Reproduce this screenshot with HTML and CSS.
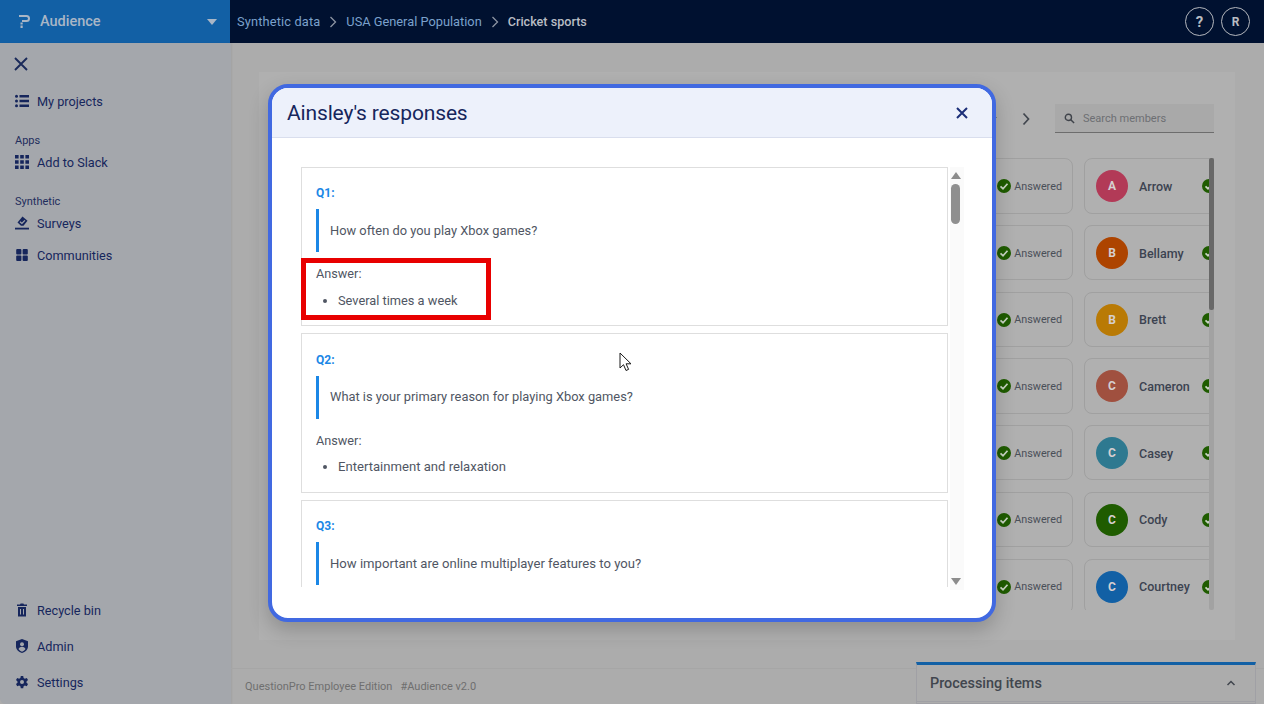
FILE: index.html
```html
<!DOCTYPE html>
<html lang="en">
<head>
<meta charset="utf-8">
<title>Ainsley's responses</title>
<link rel="stylesheet" href="styles.css">
</head>
<body>
<div class="app">
  <header class="topbar">
    <div class="brand">
      <svg class="brand-logo" viewBox="0 0 11 13"><path d="M0 1h7.500a2.500 2.500 0 0 1 0 5H3" fill="none" stroke="#a9b6c6" stroke-width="2"/><path d="M1.500 7.500h2.200v2H1.500zM1.500 10.600h2.200V13H1.500z" fill="#a9b6c6"/></svg>
      <span class="brand-name">Audience</span>
      <span class="brand-caret"></span>
    </div>
    <nav class="crumbs">
      <span class="crumb crumb-first">Synthetic data</span>
      <svg class="crumb-sep" viewBox="0 0 8 12"><path d="M1.500 1l5 5-5 5" fill="none" stroke="#8c95a3" stroke-width="1.300"/></svg>
      <span class="crumb">USA General Population</span>
      <svg class="crumb-sep" viewBox="0 0 8 12"><path d="M1.500 1l5 5-5 5" fill="none" stroke="#8c95a3" stroke-width="1.300"/></svg>
      <span class="crumb crumb-current">Cricket sports</span>
    </nav>
    <div class="top-actions">
      <span class="round-btn round-help">?</span>
      <span class="round-btn">R</span>
    </div>
  </header>

  <div class="body">
    <aside class="sidebar">
      <svg class="side-close" viewBox="0 0 14 14"><path d="M1 1l12 12M13 1L1 13" stroke="#1a2a5a" stroke-width="1.900" fill="none"/></svg>
      <div class="side-item side-first">
        <svg class="side-icon" viewBox="0 0 14 14"><circle cx="1.500" cy="2.200" r="1.500" fill="#16265c"/><circle cx="1.500" cy="7" r="1.500" fill="#16265c"/><circle cx="1.500" cy="11.800" r="1.500" fill="#16265c"/><path d="M4.500 1H14v2.500H4.500zM4.500 5.700H14v2.500H4.500zM4.500 10.500H14V13H4.500z" fill="#16265c"/></svg>
        <span>My projects</span>
      </div>
      <div class="side-label side-label-apps">Apps</div>
      <div class="side-item side-tight">
        <svg class="side-icon" viewBox="0 0 14 14"><path d="M0 0h3.600v3.600H0zM5.200 0h3.600v3.600H5.200zM10.400 0H14v3.600h-3.600zM0 5.200h3.600v3.600H0zM5.200 5.200h3.600v3.600H5.200zM10.400 5.200H14v3.600h-3.600zM0 10.400h3.600V14H0zM5.200 10.400h3.600V14H5.200zM10.400 10.400H14V14h-3.600z" fill="#16265c"/></svg>
        <span>Add to Slack</span>
      </div>
      <div class="side-label side-label-syn">Synthetic</div>
      <div class="side-item side-tight">
        <svg class="side-icon" viewBox="0 0 14 14"><path d="M0 11.700h14V13.500H0z" fill="#16265c"/><path d="M7.500.5l5 4.200-4 5H6L2.500 6.500z" fill="#16265c"/><path d="M5 5.800l1.900 1.700 3-3.200" stroke="#a4a7ac" stroke-width="1.200" fill="none"/></svg>
        <span>Surveys</span>
      </div>
      <div class="side-item side-comm">
        <svg class="side-icon" viewBox="0 0 14 14"><rect x="1.200" y="1" width="5.200" height="5.400" rx="1" fill="#16265c"/><rect x="7.600" y="1" width="5.200" height="5.400" rx="1" fill="#16265c"/><rect x="1.200" y="7.600" width="5.200" height="5.400" rx="1" fill="#16265c"/><rect x="7.600" y="7.600" width="5.200" height="5.400" rx="1" fill="#16265c"/></svg>
        <span>Communities</span>
      </div>
      <div class="side-spacer"></div>
      <div class="side-item side-bottom">
        <svg class="side-icon" viewBox="0 0 14 14"><path d="M2 1.500h3l.6-1h2.800l.6 1h3v1.500H2zM3 4h8v9.500H3zM5 6v5.500h1V6zM8 6v5.500h1V6z" fill="#16265c" fill-rule="evenodd"/></svg>
        <span>Recycle bin</span>
      </div>
      <div class="side-item side-bottom">
        <svg class="side-icon" viewBox="0 0 14 14"><path d="M7 0l6 2.200v5C13 10.500 10.500 13 7 14 3.500 13 1 10.500 1 7.200v-5z" fill="#16265c"/><circle cx="7" cy="5.300" r="2" fill="#a4a7ac"/><path d="M3.500 10c.8-1.500 2-2.200 3.500-2.200s2.700.7 3.500 2.200C9.500 11.500 8.300 12.300 7 12.700 5.700 12.300 4.500 11.500 3.500 10z" fill="#a4a7ac"/></svg>
        <span>Admin</span>
      </div>
      <div class="side-item side-bottom">
        <svg class="side-icon" viewBox="0 0 14 14"><path fill-rule="evenodd" d="M5.800 0h2.400l.4 2 1.300.7 1.900-.7 1.200 2.100-1.500 1.300v1.400l1.500 1.300-1.200 2.100-1.900-.7-1.300.7-.4 2H5.800l-.4-2-1.300-.7-1.900.7L1 8.100l1.500-1.300V5.400L1 4.100l1.200-2.100 1.900.7 1.300-.7zM7 4.100a2 2 0 1 0 0 4 2 2 0 0 0 0-4z" fill="#16265c" transform="translate(0 1)"/></svg>
        <span>Settings</span>
      </div>
    </aside>

    <main class="main">
      <section class="panel">
        <div class="panel-tools">
          <span class="pager-caret"></span>
          <svg class="pager-next" viewBox="0 0 8 14"><path d="M1.500 1.500L6.500 7l-5 5.500" fill="none" stroke="#41464e" stroke-width="1.700"/></svg>
          <div class="search">
            <svg class="search-icon" viewBox="0 0 12 12"><circle cx="4.800" cy="4.800" r="3.400" fill="none" stroke="#3f434a" stroke-width="1.500"/><path d="M7.400 7.400L11 11" stroke="#3f434a" stroke-width="1.600"/></svg>
            <span>Search members</span>
          </div>
        </div>
        <div class="members">
          <div class="member-grid">
            <div class="card"><span class="status"><span class="tick"><svg viewBox="0 0 14 14"><path d="M3.500 7.300l2.500 2.400 4.500-5" fill="none" stroke="#c9d4c3" stroke-width="1.700"/></svg></span>Answered</span></div>
            <div class="card"><span class="avatar av-a">A</span><span class="name">Arrow</span><span class="tick tick-clip"><svg viewBox="0 0 14 14"><path d="M3.500 7.300l2.500 2.400 4.500-5" fill="none" stroke="#c9d4c3" stroke-width="1.700"/></svg></span></div>
            <div class="card"><span class="status"><span class="tick"><svg viewBox="0 0 14 14"><path d="M3.500 7.300l2.500 2.400 4.500-5" fill="none" stroke="#c9d4c3" stroke-width="1.700"/></svg></span>Answered</span></div>
            <div class="card"><span class="avatar av-b">B</span><span class="name">Bellamy</span><span class="tick tick-clip"><svg viewBox="0 0 14 14"><path d="M3.500 7.300l2.500 2.400 4.500-5" fill="none" stroke="#c9d4c3" stroke-width="1.700"/></svg></span></div>
            <div class="card"><span class="status"><span class="tick"><svg viewBox="0 0 14 14"><path d="M3.500 7.300l2.500 2.400 4.500-5" fill="none" stroke="#c9d4c3" stroke-width="1.700"/></svg></span>Answered</span></div>
            <div class="card"><span class="avatar av-br">B</span><span class="name">Brett</span><span class="tick tick-clip"><svg viewBox="0 0 14 14"><path d="M3.500 7.300l2.500 2.400 4.500-5" fill="none" stroke="#c9d4c3" stroke-width="1.700"/></svg></span></div>
            <div class="card"><span class="status"><span class="tick"><svg viewBox="0 0 14 14"><path d="M3.500 7.300l2.500 2.400 4.500-5" fill="none" stroke="#c9d4c3" stroke-width="1.700"/></svg></span>Answered</span></div>
            <div class="card"><span class="avatar av-c">C</span><span class="name">Cameron</span><span class="tick tick-clip"><svg viewBox="0 0 14 14"><path d="M3.500 7.300l2.500 2.400 4.500-5" fill="none" stroke="#c9d4c3" stroke-width="1.700"/></svg></span></div>
            <div class="card"><span class="status"><span class="tick"><svg viewBox="0 0 14 14"><path d="M3.500 7.300l2.500 2.400 4.500-5" fill="none" stroke="#c9d4c3" stroke-width="1.700"/></svg></span>Answered</span></div>
            <div class="card"><span class="avatar av-ca">C</span><span class="name">Casey</span><span class="tick tick-clip"><svg viewBox="0 0 14 14"><path d="M3.500 7.300l2.500 2.400 4.500-5" fill="none" stroke="#c9d4c3" stroke-width="1.700"/></svg></span></div>
            <div class="card"><span class="status"><span class="tick"><svg viewBox="0 0 14 14"><path d="M3.500 7.300l2.500 2.400 4.500-5" fill="none" stroke="#c9d4c3" stroke-width="1.700"/></svg></span>Answered</span></div>
            <div class="card"><span class="avatar av-co">C</span><span class="name">Cody</span><span class="tick tick-clip"><svg viewBox="0 0 14 14"><path d="M3.500 7.300l2.500 2.400 4.500-5" fill="none" stroke="#c9d4c3" stroke-width="1.700"/></svg></span></div>
            <div class="card"><span class="status"><span class="tick"><svg viewBox="0 0 14 14"><path d="M3.500 7.300l2.500 2.400 4.500-5" fill="none" stroke="#c9d4c3" stroke-width="1.700"/></svg></span>Answered</span></div>
            <div class="card"><span class="avatar av-cr">C</span><span class="name">Courtney</span><span class="tick tick-clip"><svg viewBox="0 0 14 14"><path d="M3.500 7.300l2.500 2.400 4.500-5" fill="none" stroke="#c9d4c3" stroke-width="1.700"/></svg></span></div>
          </div>
          <div class="member-scroll"><div class="member-thumb"></div></div>
        </div>
      </section>
      <footer class="footer">
        <span>QuestionPro Employee Edition</span>
        <span>#Audience v2.0</span>
      </footer>
    </main>
  </div>

  <aside class="processing">
    <span class="processing-title">Processing items</span>
    <svg class="processing-chev" viewBox="0 0 10 6"><path d="M1.500 5L5 1.500 8.500 5" fill="none" stroke="#41464e" stroke-width="1.500"/></svg>
  </aside>

  <div class="modal">
    <div class="modal-head">
      <h1 class="modal-title">Ainsley's responses</h1>
      <svg class="modal-close" viewBox="0 0 12 12"><path d="M1 1l10 10M11 1L1 11" stroke="#1c2f78" stroke-width="2" fill="none"/></svg>
    </div>
    <div class="modal-body">
      <div class="qlist">
        <article class="qcard">
          <div class="qnum">Q1:</div>
          <blockquote class="qtext">How often do you play Xbox games?</blockquote>
          <div class="answer-label">Answer:</div>
          <ul class="answers"><li>Several times a week</li></ul>
          <div class="highlight"></div>
        </article>
        <article class="qcard qcard-mid">
          <div class="qnum">Q2:</div>
          <blockquote class="qtext">What is your primary reason for playing Xbox games?</blockquote>
          <div class="answer-label">Answer:</div>
          <ul class="answers"><li>Entertainment and relaxation</li></ul>
        </article>
        <article class="qcard">
          <div class="qnum">Q3:</div>
          <blockquote class="qtext qtext-wide">How important are online multiplayer features to you?</blockquote>
        </article>
      </div>
      <div class="vscroll">
        <span class="arrow-up"></span>
        <span class="vthumb"></span>
        <span class="arrow-down"></span>
      </div>
    </div>
  </div>

  <svg class="cursor" viewBox="0 0 13 20"><path d="M1 1v15l3.500-3.300L7 18.500l2.600-1.100-2.500-5.600H12z" fill="#fff" stroke="#1a1a1a" stroke-width="1"/></svg>
</div>
</body>
</html>
```
FILE: styles.css
```css
* { box-sizing: border-box; }
html, body { margin: 0; height: 100%; overflow: hidden; }
body { font-family: "Roboto", "Noto Sans", sans-serif; font-size: 12.700px; color: #16265c; }

.app { position: relative; width: 1264px; height: 704px; display: flex; flex-direction: column; background: #acacac; overflow: hidden; }

.topbar { height: 43px; flex: none; display: flex; align-items: center; background: #001130; }
.brand { width: 230px; height: 100%; display: flex; align-items: center; padding-left: 19px; background: #1260a5; }
.brand-logo { width: 11px; height: 13px; }
.brand-name { margin-left: 10px; font-size: 14.500px; font-weight: 500; color: #a9b6c6; }
.brand-caret { margin-left: auto; margin-right: 13px; width: 0; height: 0; border-left: 5px solid transparent; border-right: 5px solid transparent; border-top: 6px solid #a9b6c6; }
.crumbs { display: flex; align-items: center; padding-left: 7px; font-size: 12.800px; }
.crumb { color: #7ba1cc; }
.crumb-first { letter-spacing: .15px; }
.crumb-current { color: #b9bdc4; font-weight: 500; font-size: 12.600px; }
.crumb-sep { width: 8px; height: 12px; margin: 0 9px; }
.top-actions { margin-left: auto; display: flex; gap: 7px; padding-right: 14px; }
.round-btn { width: 29px; height: 29px; border: 1px solid #b4b7bd; border-radius: 50%; display: flex; align-items: center; justify-content: center; color: #b8bcc2; font-weight: 700; font-size: 12px; }
.round-help { font-size: 15px; }

.body { flex: 1; display: flex; min-height: 0; }
.sidebar { width: 231px; flex: none; display: flex; flex-direction: column; padding: 14px 0 13px 15px; background: #a4a7ac; border-bottom-left-radius: 6px; box-shadow: 1px 0 2px rgba(0,0,0,.06); }
.side-close { width: 14px; height: 14px; margin-left: -1px; }
.side-item { display: flex; align-items: center; gap: 8px; height: 18px; font-size: 12.700px; color: #16265c; }
.side-icon { width: 14px; height: 14px; flex: none; }
.side-first { margin-top: 21px; }
.side-label { font-size: 11px; color: #1f2d5c; height: 14px; line-height: 14px; }
.side-label-apps { margin-top: 24px; }
.side-label-syn { margin-top: 24px; }
.side-tight { margin-top: 5px; }
.side-comm { margin-top: 14px; }
.side-spacer { flex: 1; }
.side-bottom { margin-top: 18px; }

.main { flex: 1; display: flex; flex-direction: column; min-width: 0; }
.panel { margin: 29px 29px 0 28px; height: 568px; flex: none; background: #b0b0b0; padding: 32px 21px 30px 0; display: flex; flex-direction: column; overflow: hidden; }
.panel-tools { height: 29px; flex: none; display: flex; justify-content: flex-end; align-items: center; gap: 25px; }
.pager-caret { width: 0; height: 0; border-left: 3px solid transparent; border-right: 3px solid transparent; border-top: 3px solid #44505f; }
.pager-next { width: 8px; height: 14px; }
.search { width: 159px; height: 29px; display: flex; align-items: center; gap: 8px; padding-left: 9px; background: #a9a9a9; border-bottom: 1px solid #6d6d6d; font-size: 11px; color: #6d6f73; }
.search-icon { width: 11px; height: 11px; }
.members { position: relative; margin-top: 25px; padding-top: .4px; flex: 1; min-height: 0; overflow: hidden; margin-left: 620px; }
.member-grid { display: grid; grid-template-columns: repeat(2, 194px); column-gap: 11px; row-gap: 11.500px; }
.card { position: relative; height: 55.200px; display: flex; align-items: center; padding: .8px 0 0 11px; border: 1px solid #a0a0a0; border-radius: 8px; }
.avatar { width: 32px; height: 32px; flex: none; border-radius: 50%; display: flex; align-items: center; justify-content: center; font-size: 12px; font-weight: 700; color: #d5cfd0; }
.av-a { background: #b23a57; }
.av-b { background: #ad4400; }
.av-br { background: #b97a05; }
.av-c { background: #a0503f; }
.av-ca { background: #2e7990; }
.av-co { background: #1f5c00; }
.av-cr { background: #1260a5; }
.name { margin-left: 11px; font-size: 12.500px; font-weight: 500; color: #3c4350; }
.status { margin-left: auto; margin-right: 10px; display: flex; align-items: center; gap: 3px; font-size: 10.800px; color: #4a4f58; }
.tick { width: 14px; height: 14px; border-radius: 50%; background: #1f5c00; display: block; flex: none; }
.tick svg { display: block; width: 14px; height: 14px; }
.card .tick-clip { position: absolute; left: 117px; }
.member-scroll { position: absolute; top: 0; right: 0; bottom: 0; width: 5px; background: #a2a2a2; border-radius: 2px; }
.member-thumb { height: 152px; background: #686868; border-radius: 2px; }

.footer { margin-top: 28px; flex: 1; display: flex; align-items: center; gap: 8px; padding: 0 0 0 14px; border-top: 1px solid #a6a6a6; font-size: 11px; color: #6f6f6f; }

.processing { position: absolute; left: 916px; top: 662px; width: 340px; height: 42px; display: flex; align-items: center; justify-content: space-between; padding: 0 19px 2px 13px; background: #acacac; border: 1px solid #a0a0a5; border-top: 3px solid #1260a5; font-size: 14.400px; font-weight: 500; color: #41464e; }
.processing::after { content: ""; position: absolute; left: 0; right: 0; bottom: 1px; border-bottom: 1px solid #a0a0a5; }
.processing-chev { width: 10px; height: 6px; }

.modal { position: absolute; left: 268px; top: 84px; width: 728px; height: 538px; display: flex; flex-direction: column; background: #fff; border: 4px solid #4169e1; border-radius: 20px; box-shadow: 0 8px 20px rgba(0,0,0,.2); overflow: hidden; }
.modal-head { height: 50px; flex: none; display: flex; align-items: center; justify-content: space-between; padding: 0 24px 0 15px; background: #edf1fb; border-bottom: 1px solid #d9deed; }
.modal-title { margin: 0; font-size: 21px; letter-spacing: -.15px; font-weight: 400; color: #16265c; }
.modal-close { width: 12px; height: 12px; }
.modal-body { flex: 1; min-height: 0; display: flex; padding: 29px 0 28px 29px; }
.qlist { width: 647px; flex: none; display: flex; flex-direction: column; gap: 7px; overflow: hidden; height: 420px; }
.qcard { position: relative; flex: none; height: 159px; border: 1px solid #dedede; padding: 17px 14px 0; color: #505663; }
.qcard-mid { height: 160px; padding-top: 18px; }
.qnum { font-size: 12px; font-weight: 700; color: #1b87e6; height: 15px; line-height: 16px; }
.qtext { margin: 9px 0 0; height: 43px; padding: 0 0 0 11px; display: flex; align-items: center; border-left: 3px solid #1b87e6; font-size: 12.850px; }
.qtext-wide { font-size: 13.100px; }
.qcard-mid .qtext { padding-bottom: 2px; }
.answer-label { margin-top: 14px; height: 16px; line-height: 16px; }
.answers { margin: 11px 0 0; padding-left: 22px; font-size: 12.800px; }
.qcard-mid .answers { margin-top: 10px; font-size: 13.100px; }
.answers li { line-height: 16px; }
.highlight { position: absolute; left: -1px; top: 90px; width: 190px; height: 62px; border: 5px solid #e80000; }
.vscroll { position: relative; width: 14px; margin-left: 2px; background: #fafafa; }
.arrow-up, .arrow-down { position: absolute; left: 1px; width: 0; height: 0; border-left: 5px solid transparent; border-right: 5px solid transparent; }
.arrow-up { top: 5px; border-bottom: 7px solid #8c8c8c; }
.arrow-down { bottom: 5px; border-top: 7px solid #8c8c8c; }
.vthumb { position: absolute; left: 1px; top: 17px; width: 9px; height: 40px; border-radius: 5px; background: #8f8f8f; }

.cursor { position: absolute; left: 619px; top: 352px; width: 13px; height: 20px; }
```
